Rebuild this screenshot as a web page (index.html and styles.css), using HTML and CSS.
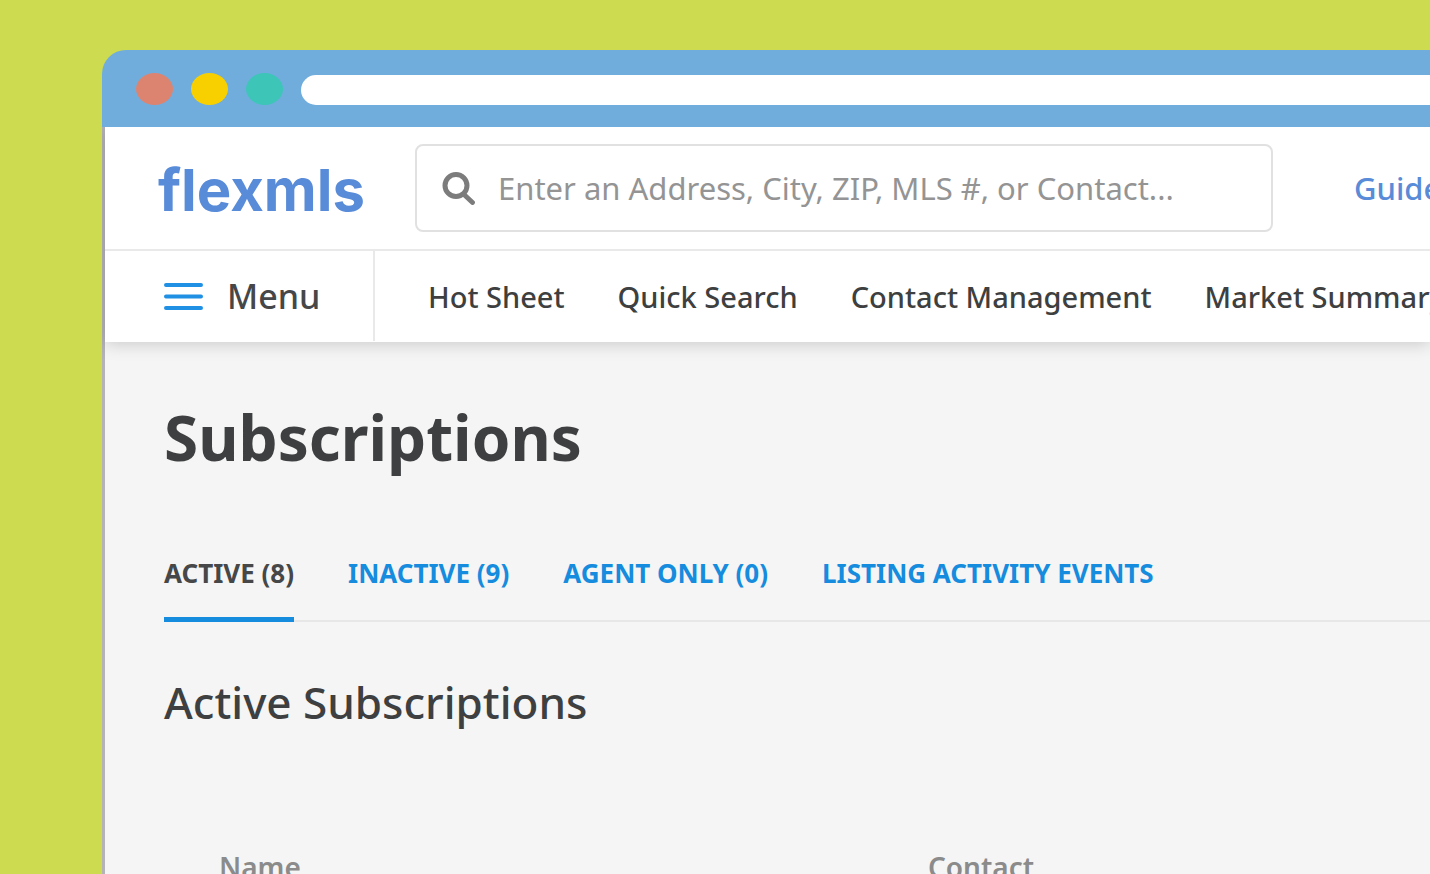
FILE: index.html
```html
<!DOCTYPE html>
<html lang="en">
<head>
<meta charset="utf-8">
<title>Subscriptions - flexmls</title>
<link rel="stylesheet" href="styles.css">
</head>
<body>
<div class="browser">
  <div class="titlebar">
    <span class="dot dot-red"></span>
    <span class="dot dot-yellow"></span>
    <span class="dot dot-green"></span>
    <span class="address"></span>
  </div>
  <div class="page">
    <header class="header">
      <div class="topbar">
        <a class="logo" href="#">flexmls</a>
        <label class="search">
          <svg class="search-icon" viewBox="0 0 34 34" aria-hidden="true">
            <circle cx="14" cy="14.500" r="11" fill="none" stroke="#7c7c7c" stroke-width="5"/>
            <path d="M22 23.500L30.500 31.500" stroke="#7c7c7c" stroke-width="4.800" stroke-linecap="round"/>
          </svg>
          <input class="search-input" type="text" aria-label="Search" placeholder="Enter an Address, City, ZIP, MLS #, or Contact...">
        </label>
        <a class="guide" href="#">Guide</a>
      </div>
      <nav class="nav">
        <button class="menu" type="button">
          <svg class="menu-icon" viewBox="0 0 40 30" aria-hidden="true">
            <path d="M3 4H38M3 15.500H38M3 27H38" stroke="#2090e4" stroke-width="4" stroke-linecap="round"/>
          </svg>
          Menu
        </button>
        <div class="links">
          <a class="link" href="#">Hot Sheet</a>
          <a class="link" href="#">Quick Search</a>
          <a class="link" href="#">Contact Management</a>
          <a class="link" href="#">Market Summary</a>
        </div>
      </nav>
    </header>
    <main class="main">
      <h1 class="title">Subscriptions</h1>
      <div class="tabs">
        <a class="tab tab-active" href="#">ACTIVE (8)</a>
        <a class="tab" href="#">INACTIVE (9)</a>
        <a class="tab" href="#">AGENT ONLY (0)</a>
        <a class="tab" href="#">LISTING ACTIVITY EVENTS</a>
      </div>
      <h2 class="subtitle">Active Subscriptions</h2>
      <table class="table">
        <thead><tr><th>Name</th><th>Contact</th></tr></thead>
      </table>
    </main>
  </div>
</div>
</body>
</html>
```
FILE: styles.css
```css
* { box-sizing: border-box; }

body {
  margin: 0;
  height: 100vh;
  padding: 50px 0 0 102px;
  overflow: hidden;
  background: #ccdb50;
  color: #3e3f40;
  font-family: "Noto Sans", "Open Sans", sans-serif;
}

a { text-decoration: none; }

.browser {
  display: flex;
  flex-direction: column;
  height: 100%;
  overflow: hidden;
  border-top-left-radius: 24px;
}

.titlebar {
  display: flex;
  position: relative;
  z-index: 1;
  flex: none;
  align-items: center;
  gap: 18px;
  height: 77px;
  padding-left: 34px;
  background: #70addd;
}

.dot {
  width: 37px;
  height: 32px;
  border-radius: 50%;
}
.dot-red { background: #dd8470; }
.dot-yellow { background: #f8d000; }
.dot-green { background: #3dc5b8; }

.address {
  flex: 1;
  height: 30px;
  margin-top: 2px;
  border-radius: 15px 0 0 15px;
  background: #fff;
}

.page {
  flex: 1;
  border-left: 3px solid #b4b4b8;
  background: #f5f5f5;
}

.header {
  background: #fff;
  box-shadow: 0 2px 16px rgba(0, 0, 0, 0.18);
}

.topbar {
  display: flex;
  align-items: center;
  height: 124px;
  padding-left: 53px;
  border-bottom: 2px solid #e9e9e9;
}

.logo {
  flex: none;
  width: 257px;
  padding-top: 4px;
  color: #588bd8;
  font-family: Inter, "Liberation Sans", sans-serif;
  font-size: 58px;
  font-weight: 700;
  line-height: 64px;
}

.search {
  display: flex;
  flex: none;
  align-items: center;
  gap: 22px;
  width: 60vw;
  height: 88px;
  padding: 0 25px;
  border: 2px solid #e1e1e1;
  border-radius: 8px;
}

.search-icon { flex: none; width: 34px; height: 34px; }

.search-input {
  flex: 1;
  min-width: 0;
  padding: 0;
  border: 0;
  outline: 0;
  background: none;
  color: #3e3f40;
  font: 400 31px/40px "Noto Sans", "Open Sans", sans-serif;
}
.search-input::placeholder { color: #949494; opacity: 1; }

.guide {
  flex: none;
  margin-left: 81px;
  color: #588bd8;
  font-size: 31px;
  font-weight: 500;
}

.nav {
  display: flex;
  height: 91px;
}

.menu {
  display: flex;
  flex: none;
  align-items: center;
  gap: 24px;
  width: 270px;
  height: 90px;
  padding: 0 0 0 58px;
  border: 0;
  border-right: 2px solid #e9e9e9;
  background: none;
  color: #464748;
  font: 500 34px/46px "Noto Sans", "Open Sans", sans-serif;
}

.menu-icon { width: 40px; height: 30px; fill: none; }

.links {
  display: flex;
  align-items: center;
  gap: 53px;
  height: 90px;
  padding-left: 53px;
}

.link {
  color: #3e3f40;
  font-size: 29px;
  font-weight: 500;
  white-space: nowrap;
}

.main { padding: 54px 0 0 59px; }

.title {
  margin: 0;
  font-size: 62px;
  font-weight: 700;
  line-height: 82px;
}

.tabs {
  display: flex;
  gap: 54px;
  margin-top: 73px;
  border-bottom: 2px solid #e7e7e7;
}

.tab {
  margin-bottom: -2px;
  padding-bottom: 22px;
  border-bottom: 5px solid transparent;
  color: #168cde;
  font-size: 26px;
  font-weight: 700;
  line-height: 44px;
  white-space: nowrap;
}
.tab-active { border-color: #168cde; color: #464748; }

.subtitle {
  margin: 49px 0 0;
  font-size: 44px;
  font-weight: 500;
  line-height: 62px;
}

.table {
  width: 100%;
  margin-top: 116px;
  border-collapse: collapse;
  table-layout: fixed;
}

.table th {
  padding: 0 0 0 55px;
  color: #8b8b8b;
  font-size: 28px;
  font-weight: 600;
  line-height: 36px;
  text-align: left;
}
.table th:first-child { width: 56%; }
```
